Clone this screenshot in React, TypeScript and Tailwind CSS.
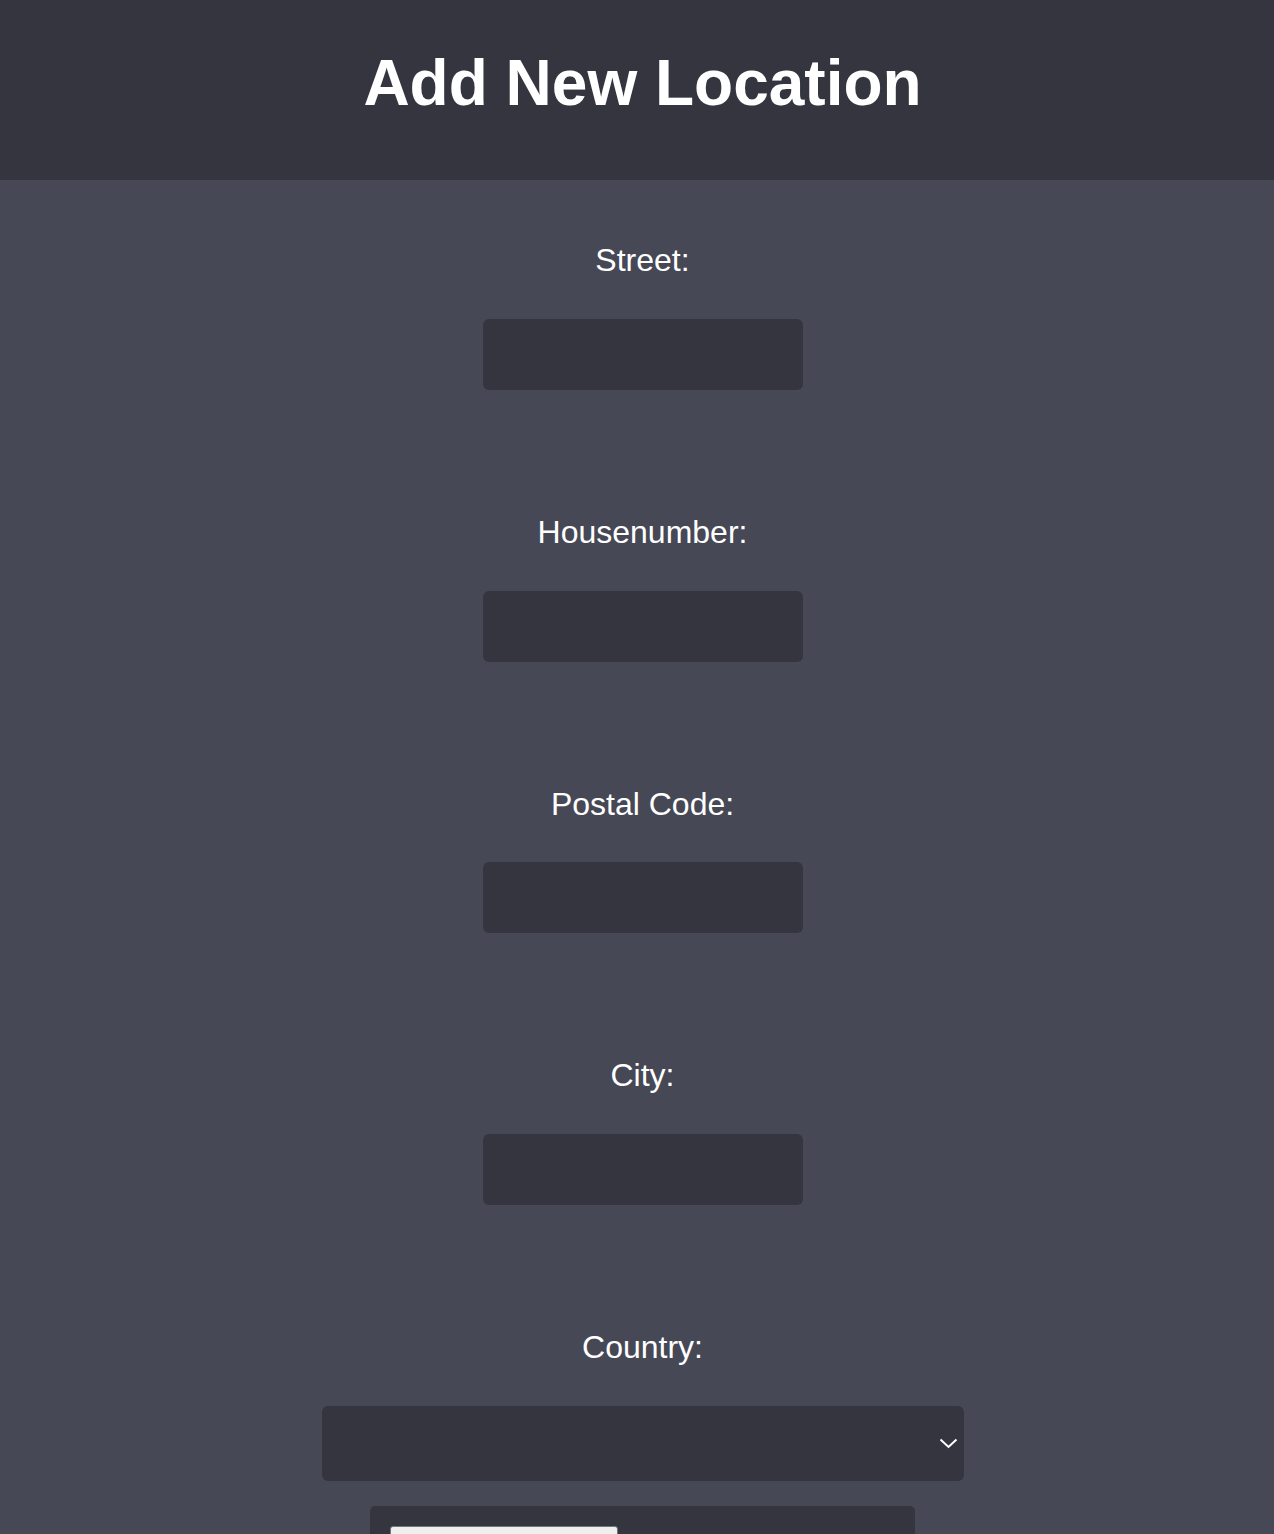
import React from "react";

const fields = ["Street:", "Housenumber:", "Postal Code:", "City:"];

export default function App() {
  return (
    <div className="min-h-[1700px] bg-[#464855] text-white" style={{ fontFamily: '"Liberation Sans", Arial, Helvetica, sans-serif' }}>
      <header className="h-[180px] bg-[#35353f] pt-[47px] pl-[11px]">
        <h1 className="text-center text-[64px] font-bold leading-[1.15]">Add New Location</h1>
      </header>
      <main className="flex flex-col items-center pt-[62px] pl-[11px]">
        {fields.map((f) => (
          <div key={f} className="flex flex-col items-center mb-[124px]">
            <label className="text-[32px] leading-[1.15]">{f}</label>
            <div className="mt-[40px] h-[71px] w-[320px] rounded-[6px] bg-[#35353f]" />
          </div>
        ))}
        <div className="flex flex-col items-center">
          <label className="text-[32px] leading-[1.15]">Country:</label>
          <div className="mt-[40px] flex h-[75px] w-[642px] items-center justify-end rounded-[6px] bg-[#35353f] pr-[6px]">
            <svg width="19" height="11" viewBox="0 0 19 11" fill="none" className="mt-[1px]">
              <path d="M1.5 1.5 L9.5 9 L17.5 1.5" stroke="white" strokeWidth="2" />
            </svg>
          </div>
          <div className="mt-[25px] w-[545px] rounded-[5px] bg-[#35353f] p-[20px]">
            <div className="h-[40px] w-[228px] rounded-[3px] border border-[#767676] bg-[#efefef]" />
          </div>
        </div>
      </main>
    </div>
  );
}
